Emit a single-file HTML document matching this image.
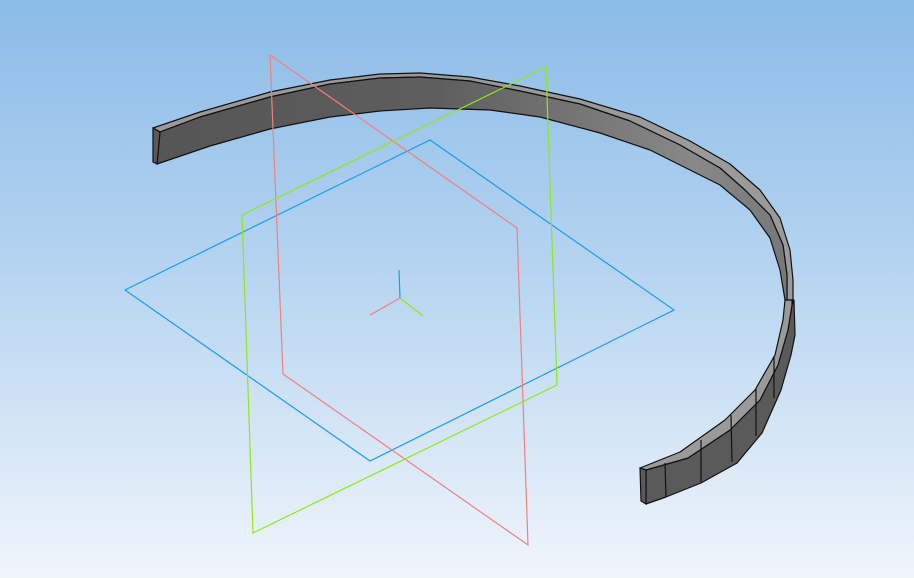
<!DOCTYPE html>
<html><head><meta charset="utf-8"><style>
html,body{margin:0;padding:0;}
body{width:914px;height:578px;overflow:hidden;background:linear-gradient(to bottom,#8bbbe8 0%,#b4d3f0 45%,#f0f5fb 100%);}
svg{display:block}
</style></head><body>
<svg width="914" height="578" viewBox="0 0 914 578" xmlns="http://www.w3.org/2000/svg">
<defs>
<linearGradient id="face" x1="150" y1="0" x2="790" y2="0" gradientUnits="userSpaceOnUse">
<stop offset="0" stop-color="#555"/><stop offset="0.45" stop-color="#5e5e5e"/><stop offset="0.85" stop-color="#888"/><stop offset="1" stop-color="#777"/>
</linearGradient>
</defs>
<polygon fill="#9a9a9a" stroke="#111" stroke-width="1.2" stroke-linejoin="round" points="153,128 200,112 270,92 330,80 380,74 420,73 470,77 520,86 580,99 640,117 690,141 730,164 760,190 780,218 790,250 793,280 793,305 787,305 787,275 783,245 770,215 745,190 720,168 680,145 630,121 580,104 520,91 470,81 420,77 380,78 330,84 270,97 200,117 160,132"/>
<polygon fill="url(#face)" stroke="#111" stroke-width="1.2" stroke-linejoin="round" points="160,132 200,117 270,97 330,84 380,78 420,77 470,81 520,91 580,104 630,121 680,145 720,168 745,190 770,215 783,245 787,275 787,300 785,300 780,270 770,238 750,210 720,185 690,170 650,150 600,133 540,117 490,110 430,108 380,111 330,117 270,129 210,146 157,164"/>
<polygon fill="#5a5a5a" stroke="#111" stroke-width="1.2" points="153,128 160,132 157,164 153,162"/>
<polygon fill="#5a5a5a" stroke="#111" stroke-width="1.2" stroke-linejoin="round" points="646,470 688,458 730,430 760,400 778,365 788,330 792,305 794,300 795,335 791,355 781,390 762,433 737,463 701,483 666,497 646,504"/>
<polygon fill="#9a9a9a" stroke="#111" stroke-width="1.2" stroke-linejoin="round" points="640,468 680,452 725,420 755,390 775,355 783,320 785,300 792,300 792,305 788,330 778,365 760,400 730,430 688,458 646,470"/>
<polygon fill="#5a5a5a" stroke="#111" stroke-width="1.2" points="640,468 646,470 646,504 641,501"/>
<g stroke="#111" stroke-width="1.2">
<line x1="665" y1="463" x2="666" y2="497"/>
<line x1="701" y1="440" x2="701" y2="482"/>
<line x1="731" y1="415" x2="732" y2="462"/>
<line x1="756" y1="389" x2="756" y2="436"/>
<line x1="774" y1="356" x2="774" y2="398"/>
</g>
<g fill="none" stroke-width="1.2">
<polygon stroke="#1a9cf0" points="125,290 430,140 674,310 370,461"/>
<polygon stroke="#f08080" points="270,55 517,228 528,545 283,374"/>
<polygon stroke="#8ee81a" points="546,67 557,385 253,533 242,215"/>
<line x1="400" y1="298" x2="399" y2="270" stroke="#1a9cf0"/>
<line x1="400" y1="298" x2="370" y2="315" stroke="#f08080"/>
<line x1="400" y1="298" x2="423" y2="316" stroke="#8ee81a"/>
</g>
</svg>
</body></html>
